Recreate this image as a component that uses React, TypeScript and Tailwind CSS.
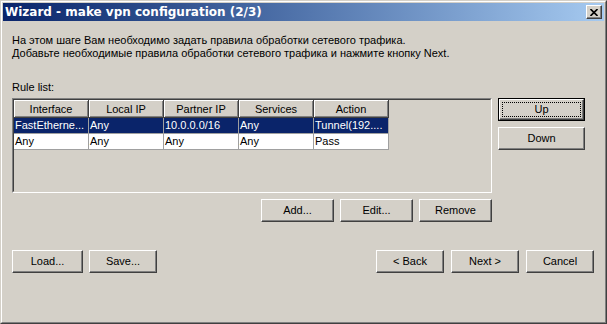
import React from 'react'

const font = { fontFamily: '"Liberation Sans", Arial, sans-serif' }

const rows = [
  { cells: ['FastEtherne...', 'Any', '10.0.0.0/16', 'Any', 'Tunnel(192....'], selected: true },
  { cells: ['Any', 'Any', 'Any', 'Any', 'Pass'], selected: false },
]

const columns = ['Interface', 'Local IP', 'Partner IP', 'Services', 'Action']

function Button({ label, w, isDefault }: { label: string; w: string; isDefault?: boolean }) {
  if (isDefault) {
    return (
      <div className={`${w} h-[23px] border border-black`}>
        <div className="h-full w-full border border-t-white border-l-white border-r-[#404040] border-b-[#404040] shadow-[inset_-1px_-1px_0_#808080] p-[2px]">
          <div className="h-full w-full border border-dotted border-black flex items-center justify-center text-[11px] text-black">
            {label}
          </div>
        </div>
      </div>
    )
  }
  return (
    <div
      className={`${w} h-[23px] border border-t-white border-l-white border-r-[#404040] border-b-[#404040] shadow-[inset_-1px_-1px_0_#808080] flex items-center justify-center text-[11px] text-black`}
    >
      {label}
    </div>
  )
}

export default function App() {
  return (
    <div style={font} className="w-[607px] h-[324px] bg-[#D4D0C8] border border-t-[#D4D0C8] border-l-[#D4D0C8] border-r-[#404040] border-b-[#404040]">
      <div className="h-full w-full border border-t-white border-l-white border-r-[#808080] border-b-[#808080] p-[1px] flex flex-col">
        {/* title bar */}
        <div className="h-[18px] shrink-0 bg-gradient-to-r from-[#0A246A] to-[#A6CAF0] flex items-center justify-between pl-[2px] pr-[2px]">
          <span className="text-white font-bold text-[12px] leading-none font-['DejaVu_Sans',sans-serif]">
            Wizard - make vpn configuration (2/3)
          </span>
          <div className="w-[16px] h-[14px] bg-[#D4D0C8] border border-t-white border-l-white border-r-[#404040] border-b-[#404040] shadow-[inset_-1px_-1px_0_#808080] flex items-center justify-center">
            <svg width="8" height="7" viewBox="0 0 8 7">
              <path d="M0.5 0 L7.5 7 M7.5 0 L0.5 7" stroke="black" strokeWidth="1.6" />
            </svg>
          </div>
        </div>

        {/* body */}
        <div className="flex flex-col pl-[9px] text-[11px] text-black">
          <div className="mt-[13px] leading-[13px]">
            <p>На этом шаге Вам необходимо задать правила обработки сетевого трафика.</p>
            <p>Добавьте необходимые правила обработки сетевого трафика и нажмите кнопку Next.</p>
          </div>
          <p className="mt-[21px] leading-[13px]">Rule list:</p>

          <div className="mt-[4px] flex gap-[6px]">
            <div className="w-[480px] h-[95px] border border-t-[#808080] border-l-[#808080] border-r-white border-b-white">
              <div className="h-full w-full border border-t-[#404040] border-l-[#404040] border-r-[#D4D0C8] border-b-[#D4D0C8] bg-[#D4D0C8]">
                <div className="flex">
                  {columns.map((c) => (
                    <div
                      key={c}
                      className="w-[75px] h-[18px] pt-[1px] border-r border-b border-[#404040] shadow-[inset_1px_1px_0_#fff,inset_-1px_-1px_0_#808080] flex items-center justify-center"
                    >
                      {c}
                    </div>
                  ))}
                </div>
                {rows.map((r, i) => (
                  <div key={i} className="flex">
                    {r.cells.map((c, j) => (
                      <div
                        key={j}
                        className={`w-[75px] h-[16px] border-r border-b border-[#A0A0A0] pl-[1px] flex items-center whitespace-nowrap overflow-hidden ${
                          r.selected ? 'bg-[#0A246A] text-white' : 'bg-white text-black'
                        }`}
                      >
                        {c}
                      </div>
                    ))}
                  </div>
                ))}
              </div>
            </div>
            <div className="flex flex-col gap-[6px]">
              <Button label="Up" w="w-[87px]" isDefault />
              <Button label="Down" w="w-[87px]" />
            </div>
          </div>

          <div className="mt-[6px] w-[480px] flex justify-end gap-[6px]">
            <Button label="Add..." w="w-[73px]" />
            <Button label="Edit..." w="w-[73px]" />
            <Button label="Remove" w="w-[73px]" />
          </div>

          <div className="mt-[28px] w-[582px] flex justify-between">
            <div className="flex gap-[6px]">
              <Button label="Load..." w="w-[71px]" />
              <Button label="Save..." w="w-[68px]" />
            </div>
            <div className="flex gap-[7px]">
              <Button label="< Back" w="w-[68px]" />
              <Button label="Next >" w="w-[68px]" />
              <Button label="Cancel" w="w-[68px]" />
            </div>
          </div>
        </div>
      </div>
    </div>
  )
}
